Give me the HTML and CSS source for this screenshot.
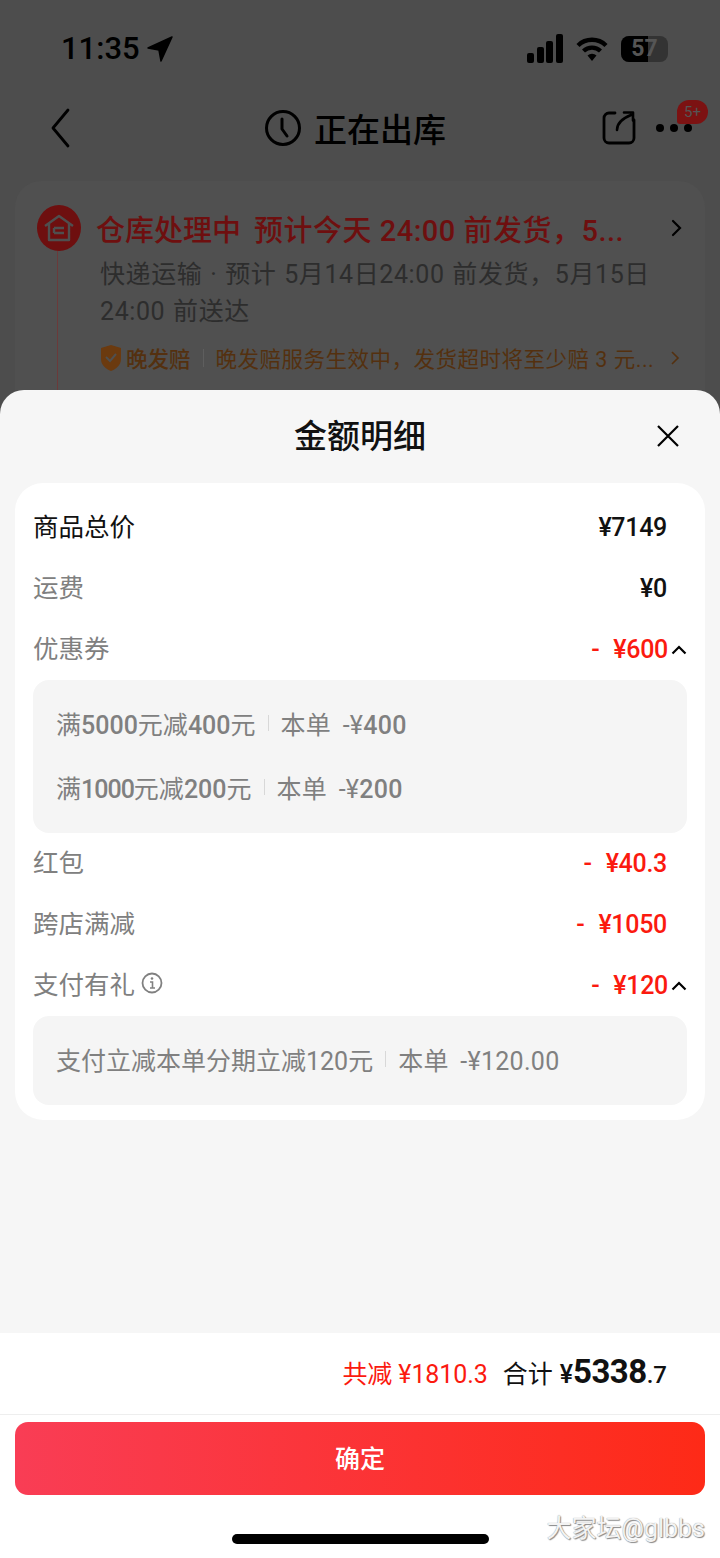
FILE: index.html
```html
<!DOCTYPE html>
<html lang="zh-CN">
<head>
<meta charset="UTF-8">
<title>金额明细</title>
<link rel="stylesheet" href="styles.css">
</head>
<body>
<div class="backdrop">
  <div class="status-bar">
    <div class="status-time">
      <span>11:35</span>
      <svg width="26" height="26" viewBox="0 0 26 26"><path d="M25 1 1 12l11 2 2 11z" fill="#000" stroke="#000" stroke-width="1.5" stroke-linejoin="round"/></svg>
    </div>
    <div class="status-icons">
      <svg width="36" height="32" viewBox="0 0 36 32"><g fill="#000"><rect x="0" y="20" width="7" height="10" rx="2"/><rect x="10" y="14" width="7" height="16" rx="2"/><rect x="19" y="8" width="7" height="22" rx="2"/><rect x="29" y="1" width="7" height="29" rx="2"/></g></svg>
      <svg width="32" height="26" viewBox="0 0 32 26"><g fill="none" stroke="#000" stroke-width="4.4"><path d="M2 9.5a20 20 0 0 1 28 0"/><path d="M7.500 15a12.500 12.500 0 0 1 17 0"/></g><path d="M11.500 19.500a6.500 6.500 0 0 1 9 0L16 25z" fill="#000"/></svg>
      <div class="battery"><div class="battery-fill"></div><span class="battery-num">57</span></div>
    </div>
  </div>

  <div class="top-nav">
    <svg class="nav-back" width="20" height="40" viewBox="0 0 20 40"><path d="M18 2 3 20l15 18" fill="none" stroke="#000" stroke-width="2.800" stroke-linecap="round" stroke-linejoin="round"/></svg>
    <div class="nav-title">
      <svg width="38" height="38" viewBox="0 0 38 38"><circle cx="19" cy="19" r="16.500" fill="none" stroke="#000" stroke-width="3"/><path d="M18 10v10l5 7" fill="none" stroke="#000" stroke-width="3" stroke-linecap="round" stroke-linejoin="round"/></svg>
      <span>正在出库</span>
    </div>
    <div class="nav-actions">
      <svg width="34" height="34" viewBox="0 0 34 34"><path d="M13 2H7a5 5 0 0 0-5 5v20a5 5 0 0 0 5 5h20a5 5 0 0 0 5-5V9" fill="none" stroke="#000" stroke-width="2.800" stroke-linecap="round"/><path d="M15 19c0-6 4-11 14-15M22 1.500h9v8" fill="none" stroke="#000" stroke-width="2.600" stroke-linecap="round" stroke-linejoin="round"/></svg>
      <div class="nav-more"><i></i><i></i><i></i><span class="nav-badge">5+</span></div>
    </div>
  </div>

  <div class="track-card">
    <div class="track-head">
      <div class="track-icon">
        <svg width="32" height="30" viewBox="0 0 32 30"><path d="M2 13 16 3l14 10M6 11v16h20V11M11 15h10M11 20h10M11 15v5" fill="none" stroke="#4f4f4f" stroke-width="2.400" stroke-linejoin="round"/></svg>
      </div>
      <div class="track-title"><span>仓库处理中</span><span class="track-eta">预计今天 24:00 前发货，5...</span></div>
      <svg width="12" height="20" viewBox="0 0 12 20"><path d="m2 3 7 7-7 7" fill="none" stroke="#000" stroke-width="2.200" stroke-linecap="round"/></svg>
    </div>
    <div class="track-body">
      <p class="track-desc">快递运输 · 预计 5月14日24:00 前发货，5月15日 24:00 前送达</p>
      <div class="track-promise">
        <svg width="22" height="28" viewBox="0 0 22 28"><path d="M11 1 21 4v11c0 6-5 10-10 12C6 25 1 21 1 15V4z" fill="#6b3a0f"/><path d="m6 13 4 4 6-7" fill="none" stroke="#4f4f4f" stroke-width="2"/></svg>
        <span class="promise-name">晚发赔</span>
        <span class="promise-sep"></span>
        <span class="promise-text">晚发赔服务生效中，发货超时将至少赔 3 元...</span>
        <svg width="10" height="18" viewBox="0 0 10 18"><path d="m2 3 6 6-6 6" fill="none" stroke="#54300f" stroke-width="1.600"/></svg>
      </div>
    </div>
  </div>
</div>

<div class="sheet">
  <div class="sheet-head">
    <h1>金额明细</h1>
    <svg class="sheet-close" width="24" height="24" viewBox="0 0 24 24"><path d="m2 2 20 20M22 2 2 22" stroke="#000" stroke-width="2.200" fill="none"/></svg>
  </div>

  <div class="detail-card">
    <div class="row row-main"><span>商品总价</span><span class="amt">¥7149</span></div>
    <div class="row"><span>运费</span><span class="amt">¥0</span></div>
    <div class="row row-open">
      <span>优惠券</span>
      <span class="amt red">- ¥600</span>
      <svg class="chev" width="16" height="10" viewBox="0 0 16 10"><path d="m1.500 8.500 6.500-6.500 6.500 6.500" fill="none" stroke="#000" stroke-width="2.200"/></svg>
    </div>
    <div class="sub-panel">
      <div class="sub-line"><span>满<b class="num">5000</b>元减<b class="num">400</b>元</span><i class="sub-sep"></i><span class="sub-amt">本单 -¥<b class="num">400</b></span></div>
      <div class="sub-line"><span>满<b class="num tight">1000</b>元减<b class="num">200</b>元</span><i class="sub-sep"></i><span class="sub-amt">本单 -¥<b class="num">200</b></span></div>
    </div>
    <div class="row"><span>红包</span><span class="amt red">- ¥40.3</span></div>
    <div class="row"><span>跨店满减</span><span class="amt red">- ¥1050</span></div>
    <div class="row row-open">
      <span class="label-info">支付有礼
        <svg width="22" height="22" viewBox="0 0 22 22"><circle cx="11" cy="11" r="9.500" fill="none" stroke="#808080" stroke-width="1.800"/><path d="M9 10h2.500v6M9 16h5" fill="none" stroke="#808080" stroke-width="1.600"/><circle cx="11" cy="6.500" r="1.300" fill="#808080"/></svg>
      </span>
      <span class="amt red">- ¥120</span>
      <svg class="chev" width="16" height="10" viewBox="0 0 16 10"><path d="m1.500 8.500 6.500-6.500 6.500 6.500" fill="none" stroke="#000" stroke-width="2.200"/></svg>
    </div>
    <div class="sub-panel">
      <div class="sub-line"><span>支付立减本单分期立减120元</span><i class="sub-sep"></i><span class="sub-amt">本单 -¥120.00</span></div>
    </div>
  </div>

  <div class="sheet-foot">
    <div class="totals">
      <span class="saved">共减 ¥1810.3</span>
      <span class="sum-label">合计</span>
      <span class="sum">¥<b>5338</b><small>.7</small></span>
    </div>
    <div class="confirm-wrap">
      <button type="button" class="confirm">确定</button>
    </div>
    <div class="home-area">
      <div class="home-bar"></div>
      <span class="watermark">大家坛@glbbs</span>
    </div>
  </div>
</div>
</body>
</html>
```

FILE: styles.css
```css
* {
  box-sizing: border-box;
}
body {
  display: flex;
  flex-direction: column;
  width: 720px;
  height: 1558px;
  margin: 0;
  overflow: hidden;
  background-color: #4d4d4d;
  font-family: Roboto, 'Noto Sans CJK SC', sans-serif;
}

/* dimmed order page behind the sheet */
.backdrop {
  flex: none;
  height: 390px;
  overflow: hidden;
}
.status-bar {
  display: flex;
  justify-content: space-between;
  align-items: center;
  height: 97px;
  padding: 0 52px 0 61px;
}
.status-time {
  display: flex;
  align-items: center;
  gap: 7px;
  font-size: 31px;
  font-weight: 500;
  color: #000;
}
.status-icons {
  display: flex;
  align-items: center;
  gap: 13px;
}
.battery {
  position: relative;
  width: 47px;
  height: 26px;
  border-radius: 8px;
  overflow: hidden;
  background-color: #333;
}
.battery-fill {
  width: 27px;
  height: 100%;
  background-color: #000;
}
.battery-num {
  position: absolute;
  top: 0;
  left: 0;
  width: 100%;
  font-size: 23px;
  font-weight: 700;
  line-height: 26px;
  text-align: center;
  color: #555;
}

.top-nav {
  display: flex;
  align-items: center;
  height: 62px;
  padding: 0 28px 0 50px;
}
.nav-title {
  display: flex;
  align-items: center;
  gap: 12px;
  margin-left: 194px;
  font-size: 33px;
  font-weight: 500;
  color: #000;
}
.nav-actions {
  display: flex;
  align-items: center;
  gap: 20px;
  margin-left: auto;
}
.nav-more {
  position: relative;
  display: flex;
  gap: 6px;
  width: 36px;
}
.nav-more i {
  width: 8px;
  height: 8px;
  border-radius: 50%;
  background-color: #000;
}
.nav-badge {
  position: absolute;
  top: -24px;
  left: 21px;
  width: 31px;
  height: 24px;
  border-radius: 12px 12px 12px 3px;
  background-color: #7c1212;
  font-size: 15px;
  line-height: 24px;
  text-align: center;
  color: #555;
}

.track-card {
  margin: 22px 15px 0;
  height: 240px;
  padding: 24px 22px 0;
  border-radius: 26px 26px 0 0;
  background-color: #505050;
}
.track-head {
  display: flex;
  align-items: center;
  gap: 15px;
}
.track-icon {
  display: flex;
  flex: none;
  justify-content: center;
  align-items: center;
  width: 44px;
  height: 46px;
  border-radius: 50%;
  background-color: #6e0f0f;
}
.track-title {
  display: flex;
  flex: 1;
  gap: 13px;
  font-size: 29px;
  font-weight: 500;
  color: #6e0f0f;
  white-space: nowrap;
}
.track-eta {
  letter-spacing: 0.5px;
}
.track-body {
  margin-left: 20px;
  padding: 5px 0 0 42px;
  border-left: 1px solid #6b3a3a;
  height: 140px;
}
.track-desc {
  margin: 0;
  font-size: 25px;
  line-height: 37px;
  letter-spacing: 0.6px;
  word-spacing: 1px;
  color: #2d2d2d;
}
.track-promise {
  display: flex;
  align-items: center;
  gap: 4px;
  margin-top: 12px;
  color: #54300f;
  white-space: nowrap;
}
.promise-name {
  font-size: 21.5px;
  font-weight: 500;
}
.promise-sep {
  width: 1px;
  height: 18px;
  margin: 0 8px;
  background-color: #5e5e5e;
}
.promise-text {
  margin-right: 12px;
  font-size: 21.5px;
  letter-spacing: 0.5px;
}

/* amount detail sheet */
.sheet {
  display: flex;
  flex: 1;
  flex-direction: column;
  min-height: 0;
  border-radius: 24px 24px 0 0;
  background-color: #f6f6f6;
}
.sheet-head {
  position: relative;
  display: flex;
  justify-content: center;
  align-items: center;
  height: 93px;
}
.sheet-head h1 {
  margin: 0;
  padding-bottom: 6px;
  font-size: 33px;
  font-weight: 500;
  color: #111;
}
.sheet-close {
  position: absolute;
  top: 34px;
  right: 40px;
}
.detail-card {
  flex: none;
  margin: 0 15px;
  padding: 14px 18px 15px;
  border-radius: 28px;
  background-color: #fff;
}
.row {
  display: flex;
  justify-content: space-between;
  align-items: center;
  height: 61px;
  padding-right: 20px;
  font-size: 25.5px;
  color: #808080;
}
.row > span:first-child {
  padding-bottom: 6px;
}
.row-main {
  color: #111;
}
.row-open {
  padding-right: 0;
}
.row-open .amt {
  margin-left: auto;
  margin-right: 3px;
}
.amt {
  font-size: 25px;
  font-weight: 500;
  letter-spacing: -0.3px;
  color: #111;
}
.red {
  word-spacing: 8px;
  color: #fb1a0f;
}
.label-info {
  display: flex;
  align-items: center;
  gap: 6px;
}
.sub-panel {
  padding: 12px 23px 13px;
  border-radius: 16px;
  background-color: #f5f5f5;
}
.sub-line {
  display: flex;
  align-items: center;
  height: 64px;
  padding-bottom: 2px;
  font-size: 25px;
  color: #808080;
}
.sub-amt {
  word-spacing: 5px;
  letter-spacing: 0.3px;
}
.num {
  font-weight: 500;
}
.tight {
  letter-spacing: -1px;
}
.sub-sep {
  width: 1px;
  height: 16px;
  margin: 0 12px;
  background-color: #d8d8d8;
}

.sheet-foot {
  margin-top: auto;
  background-color: #fff;
}
.totals {
  display: flex;
  justify-content: flex-end;
  align-items: baseline;
  height: 82px;
  padding: 19px 53px 0 0;
  border-bottom: 1px solid #eee;
  font-size: 25px;
  color: #111;
}
.saved {
  margin-right: 15px;
  letter-spacing: -0.1px;
  color: #fb1a0f;
}
.sum-label {
  margin-right: 7px;
}
.sum {
  font-weight: 500;
}
.sum b {
  font-size: 33px;
  font-weight: 700;
  letter-spacing: -0.5px;
}
.sum small {
  font-size: 24px;
  font-weight: 500;
}
.confirm-wrap {
  padding: 7px 15px 0;
}
.confirm {
  display: block;
  width: 100%;
  height: 73px;
  padding: 0 0 4px;
  border: 0;
  border-radius: 13px;
  background: linear-gradient(90deg, #f93d55, #fe2a17);
  font-family: inherit;
  font-size: 25px;
  font-weight: 500;
  color: #fff;
}
.home-area {
  position: relative;
  height: 63px;
}
.home-bar {
  position: absolute;
  top: 39px;
  left: 232px;
  width: 257px;
  height: 10px;
  border-radius: 5px;
  background-color: #000;
}
.watermark {
  position: absolute;
  top: 13px;
  right: 15px;
  font-size: 25px;
  color: #f3f3f3;
  text-shadow: 1px 1px 1px #888, 0 0 1px #888;
}
```
